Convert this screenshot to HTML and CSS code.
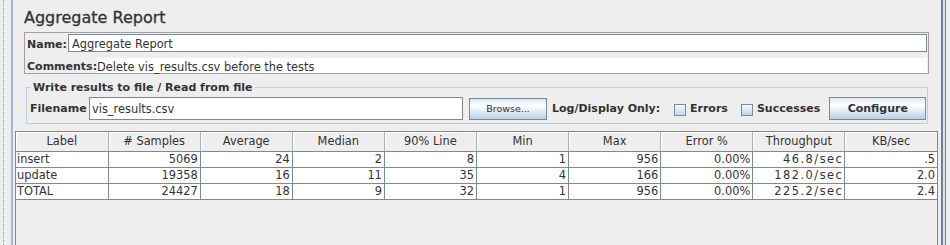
FILE: index.html
```html
<!DOCTYPE html>
<html lang="en">
<head>
    <meta charset="UTF-8">
    <meta name="viewport" content="width=device-width, initial-scale=1.0">
    <title>Aggregate Report</title>
    <link rel="stylesheet" href="styles.css">
</head>
<body>
    <div class="window">
        <div class="divider"></div>

        <div class="panel">
            <!-- Title, name and file settings -->
            <div class="header-panel">
                <h1 class="title">Aggregate Report</h1>

                <div class="name-box">
                    <div class="name-row">
                        <span class="label name-label">Name:</span>
                        <div class="text-field name-field">Aggregate Report</div>
                    </div>
                    <div class="comments-row">
                        <span class="label">Comments:</span>
                        <div class="comments-area">Delete vis_results.csv before the tests</div>
                    </div>
                </div>

                <fieldset class="file-panel">
                    <legend>Write results to file / Read from file</legend>
                    <div class="file-row">
                        <span class="label file-label">Filename</span>
                        <div class="text-field file-field">vis_results.csv</div>
                        <button class="btn browse">Browse...</button>
                        <span class="label log-label">Log/Display Only:</span>
                        <label class="check errors"><span class="box"></span>Errors</label>
                        <label class="check successes"><span class="box"></span>Successes</label>
                        <button class="btn configure">Configure</button>
                    </div>
                </fieldset>
            </div>

            <!-- Results table -->
            <div class="results">
                <table>
                    <thead>
                        <tr>
                            <th>Label</th>
                            <th># Samples</th>
                            <th>Average</th>
                            <th>Median</th>
                            <th>90% Line</th>
                            <th>Min</th>
                            <th>Max</th>
                            <th>Error %</th>
                            <th>Throughput</th>
                            <th>KB/sec</th>
                        </tr>
                    </thead>
                    <tbody>
                        <tr>
                            <td class="name">insert</td>
                            <td>5069</td>
                            <td>24</td>
                            <td>2</td>
                            <td>8</td>
                            <td>1</td>
                            <td>956</td>
                            <td>0.00%</td>
                            <td class="rate">46.8/sec</td>
                            <td>.5</td>
                        </tr>
                        <tr>
                            <td class="name">update</td>
                            <td>19358</td>
                            <td>16</td>
                            <td>11</td>
                            <td>35</td>
                            <td>4</td>
                            <td>166</td>
                            <td>0.00%</td>
                            <td class="rate">182.0/sec</td>
                            <td>2.0</td>
                        </tr>
                        <tr>
                            <td class="name">TOTAL</td>
                            <td>24427</td>
                            <td>18</td>
                            <td>9</td>
                            <td>32</td>
                            <td>1</td>
                            <td>956</td>
                            <td>0.00%</td>
                            <td class="rate">225.2/sec</td>
                            <td>2.4</td>
                        </tr>
                    </tbody>
                </table>
            </div>
        </div>

        <div class="edge"></div>
    </div>
</body>
</html>
```

FILE: styles.css
```css
* {
    margin: 0;
    padding: 0;
    box-sizing: border-box;
}

body {
    background: #eeeeee;
    font-family: "DejaVu Sans", Verdana, sans-serif;
    font-size: 11.4px;
    color: #333333;
    width: 950px;
    height: 245px;
    overflow: hidden;
}

.window {
    display: flex;
    height: 245px;
}

/* split pane divider on the left */
.divider {
    width: 13px;
    border-right: 2px solid #a9b9ca;
    background-image: repeating-linear-gradient(to bottom, #8d9db0 0 1px, transparent 1px 2px);
    background-size: 1px 100%;
    background-position: 3px 0;
    background-repeat: no-repeat;
}

.panel {
    flex: 1;
    min-width: 0;
    display: flex;
    flex-direction: column;
}

.edge {
    width: 12px;
    background: linear-gradient(to right, #eeeeee 0 3px, #6f8094 3px 5px, #dfe5eb 5px 7px, #6f8094 7px 8px, #eeeeee 8px);
}

.header-panel {
    padding: 8px 9px 0 11px;
}

.title {
    font-size: 16px;
    font-weight: normal;
    line-height: 20px;
    margin-bottom: 4px;
    -webkit-text-stroke: 0.3px #333333;
}

.label {
    font-weight: bold;
    font-size: 11px;
    white-space: nowrap;
}

/* name + comments */
.name-box {
    border: 1px solid #a0a0a0;
    padding: 1px 1px 0 2px;
}

.name-row {
    display: flex;
    align-items: baseline;
    height: 18px;
}

.name-label {
    width: 41px;
}

.text-field {
    background: #ffffff;
    border: 1px solid #7a8a99;
    line-height: 14px;
    white-space: nowrap;
}

.name-field {
    flex: 1;
    height: 18px;
    padding: 2px 0 0 3px;
}

.comments-row {
    display: flex;
    height: 15px;
    margin-top: 6px;
}

.comments-row .label,
.comments-area {
    padding-top: 3px;
    line-height: 12px;
}

.comments-area {
    flex: 1;
    background: #ffffff;
    white-space: nowrap;
}

/* write results to file */
.file-panel {
    margin: 7px 1px 0 2px;
    border: 1px solid #b8cfe5;
    padding: 3px 0 3px 3px;
    min-width: 0;
}

.file-panel legend {
    font-weight: bold;
    font-size: 11px;
    line-height: 13px;
    padding: 0 2px;
    margin-left: 1px;
}

.file-row {
    display: flex;
    align-items: center;
    height: 23px;
}

.file-row .label {
    line-height: 13px;
}

.file-label {
    width: 59px;
}

.file-field {
    width: 374px;
    height: 23px;
    padding: 4px 0 0 2px;
}

.btn {
    font-family: "DejaVu Sans", Verdana, sans-serif;
    color: #333333;
    border: 1px solid #7a8a99;
    background: linear-gradient(to bottom, #dde8f3 0%, #ffffff 35%, #f4f7fa 45%, #b8cfe5 100%);
    cursor: pointer;
}

.browse {
    margin-left: 6px;
    width: 78px;
    height: 22px;
    font-size: 9.5px;
}

.log-label {
    margin-left: 5px;
    width: 114px;
}

.check {
    display: flex;
    align-items: center;
    font-weight: bold;
    font-size: 11px;
    line-height: 13px;
}

.check .box {
    width: 12px;
    height: 12px;
    margin: 3px 4px 0 0;
    border: 1px solid #7a8a99;
    background: linear-gradient(to bottom, #f6f9fc, #c4d5e8);
}

.errors {
    margin-left: 8px;
}

.successes {
    margin-left: 13px;
}

.configure {
    margin-left: 9px;
    width: 97px;
    height: 23px;
    font-weight: bold;
    font-size: 11px;
}

/* results table */
.results {
    flex: 1;
    margin: 7px 0 0 2px;
    border: 1px solid #7a8a99;
    border-bottom: none;
    background: #eeeeee;
}

.results table {
    width: 100%;
    border-collapse: collapse;
    table-layout: fixed;
}

.results th {
    height: 19px;
    padding: 0;
    font-weight: normal;
    line-height: 18px;
    background: #eeeeee;
    border-right: 1px solid #a5b0bc;
    border-bottom: 1px solid #7a8a99;
    box-shadow: inset 1px 1px 0 #ffffff;
}

.results td {
    height: 16px;
    padding: 0 2px 0 1px;
    line-height: 15px;
    text-align: right;
    white-space: nowrap;
    background: #ffffff;
    border-right: 1px solid #7a8a99;
    border-bottom: 1px solid #7a8a99;
}

.results td.name {
    text-align: left;
}

.results td.rate {
    letter-spacing: 1.5px;
    padding-right: 1px;
}

.results tr > :last-child {
    border-right: none;
}
```
